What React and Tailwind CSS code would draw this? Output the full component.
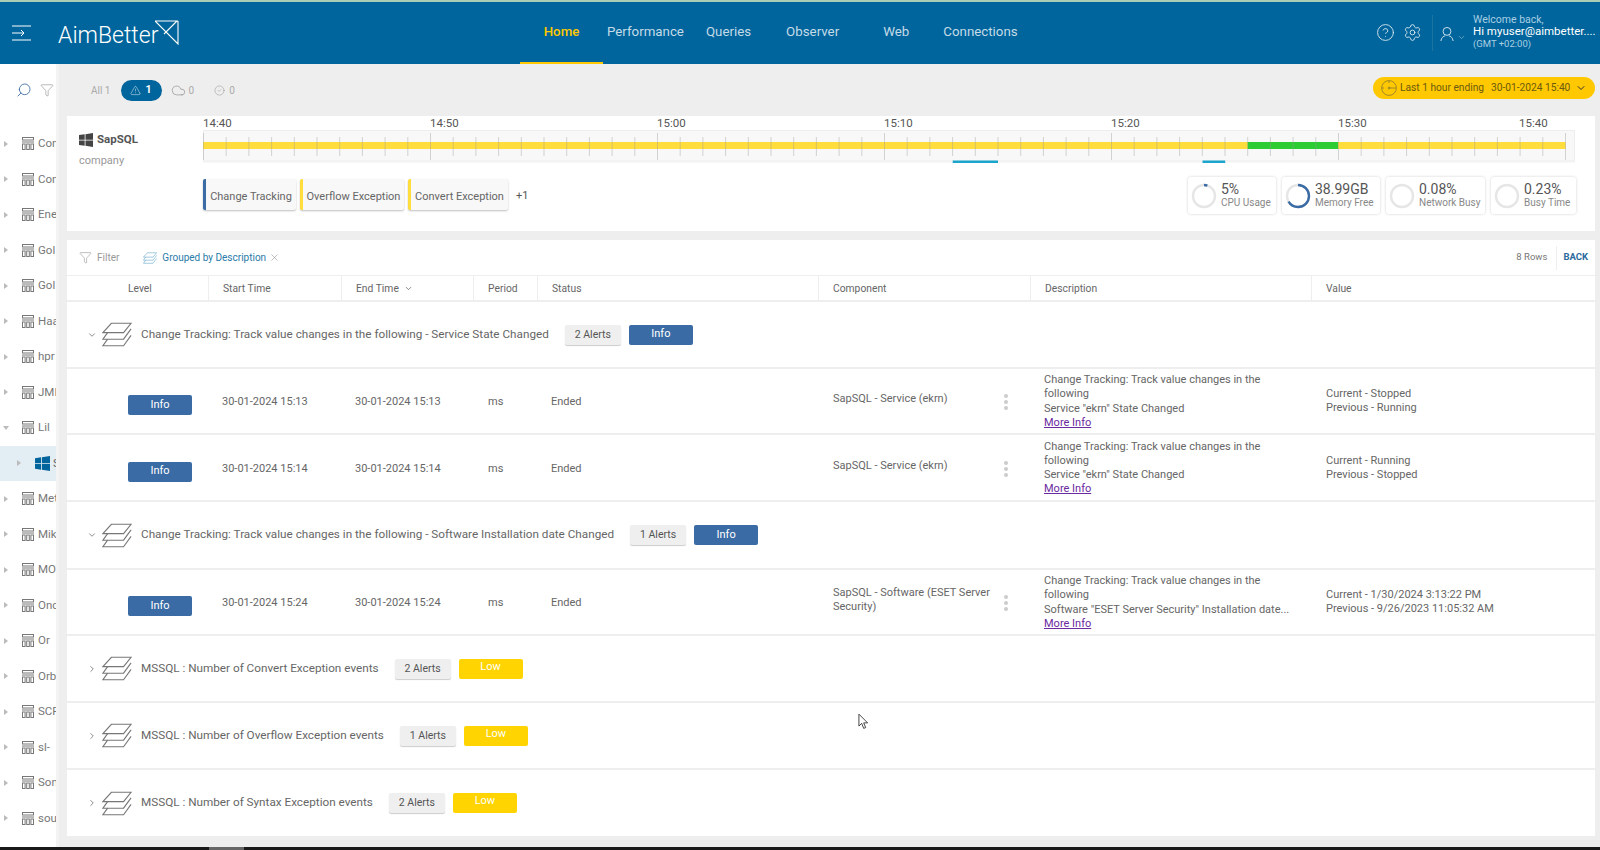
import React from 'react';
import { ChevronDown, ChevronRight, CircleHelp, Settings, Search, Funnel, X, TriangleAlert, Cloud, CircleCheck } from 'lucide-react';

const SERVERS = ['Con', 'Con', 'Ene', 'Gol', 'Gol', 'Haa', 'hpr', 'JMF', 'Lil', 'S', 'Met', 'Mik', 'MOT', 'Onc', 'Or', 'Orb', 'SCF', 'sl-', 'Son', 'sou'];
const COL = '141px 133px 132px 64px 281px 212px 281px 1fr';
const LABELS = [['14:40', 'w-[227px]'], ['14:50', 'w-[227px]'], ['15:00', 'w-[227px]'], ['15:10', 'w-[227px]'], ['15:20', 'w-[227px]'], ['15:30', 'w-[181px]'], ['15:40', 'w-[40px]']];

function Windows({ className, fill }) {
  return (
    <svg viewBox="0 0 16 16" className={className} fill={fill}>
      <path d="M0 2.4 6.5 1.4V7.6H0zM7.4 1.3 16 0V7.6H7.4zM0 8.5H6.5V14.6L0 13.6zM7.4 8.5H16V16L7.4 14.7z" />
    </svg>
  );
}

function DbIcon() {
  return (
    <svg viewBox="0 0 12 13" className="w-3 h-[13px] shrink-0" fill="none" stroke="#777" strokeWidth="1">
      <rect x="0.5" y="0.5" width="11" height="2.5" />
      <path d="M0 5H12" />
      <rect x="0.5" y="7" width="2.6" height="5.5" />
      <rect x="4.7" y="7" width="2.6" height="5.5" />
      <rect x="8.9" y="7" width="2.6" height="5.5" />
    </svg>
  );
}

function Layers({ className, stroke = '#777' }) {
  return (
    <svg viewBox="0 0 32 26" className={className} fill="none" stroke={stroke} strokeWidth="1.2">
      <path d="M10 1H31L23 11H1Z" />
      <path d="M6 11 1 18H23L31 7" />
      <path d="M6 18 1 25H23L31 14" />
    </svg>
  );
}

function Sidebar() {
  return (
    <div className="w-[59px] shrink-0 flex bg-white overflow-hidden">
      <div className="w-14 shrink-0 pt-4">
        <div className="h-5 flex items-center pl-4 gap-[8px]">
          <Search size={16} strokeWidth={1.3} className="text-[#3a6ba5] -scale-x-100" />
          <Funnel size={14} strokeWidth={1} className="text-[#888]" />
        </div>
        <div className="mt-[26px]">
          {SERVERS.map((name, i) => (
            i === 9 ? (
              <div key={i} className="h-[35.5px] flex items-center bg-[#e3edf4] overflow-hidden">
                <span className="ml-[17px] w-0 h-0 border-y-[3px] border-y-transparent border-l-[4px] border-l-[#bbb]" />
                <Windows className="w-[15px] h-[15px] ml-[14px] shrink-0" fill="#00659c" />
                <span className="ml-[3px] text-[11.5px] text-[#666]">{name}</span>
              </div>
            ) : (
              <div key={i} className="h-[35.5px] flex items-center overflow-hidden">
                {i === 8
                  ? <span className="ml-[3px] w-0 h-0 border-x-[3px] border-x-transparent border-t-[4px] border-t-[#bbb]" />
                  : <span className="ml-1 w-0 h-0 border-y-[3px] border-y-transparent border-l-[4px] border-l-[#bbb]" />}
                <span className={i === 8 ? 'ml-[13px]' : 'ml-[14px]'}><DbIcon /></span>
                <span className="ml-1 text-[11.5px] text-[#777] whitespace-nowrap">{name}</span>
              </div>
            )
          ))}
        </div>
      </div>
      <div className="w-[3px] bg-[#f3f3f3]" />
    </div>
  );
}

function Header() {
  return (
    <header className="h-[62px] shrink-0 bg-[#00659c] flex items-start text-white">
      <svg viewBox="0 0 19 16" className="w-[19px] h-4 mt-[23px] ml-3 shrink-0" fill="none" stroke="#fff" strokeWidth="1">
        <path d="M0 1H19M0 15H19M0 8H12M9 5l3 3-3 3" />
      </svg>
      <span className="ml-[27px] mt-[20px] text-[23px] leading-7 font-light w-[97px] whitespace-nowrap">AimBetter</span>
      <svg viewBox="0 0 24 25" className="w-6 h-[25px] mt-[18px] shrink-0" fill="none" stroke="#fff" strokeWidth="1.1">
        <path d="M0 1 22 1 9 14M0 1 23 24V1" />
      </svg>
      <nav className="flex ml-[341px] h-[62px] text-[13.3px]">
        <a className="w-[83px] h-[62px] flex items-center justify-center text-[#ffc800] font-medium border-b-[2px] border-[#ffc800]">Home</a>
        <a className="ml-1 h-[60px] flex items-center text-[#c5dbe8]">Performance</a>
        <a className="ml-[22px] h-[60px] flex items-center text-[#c5dbe8]">Queries</a>
        <a className="ml-[35px] h-[60px] flex items-center text-[#c5dbe8]">Observer</a>
        <a className="ml-[44px] h-[60px] flex items-center text-[#c5dbe8]">Web</a>
        <a className="ml-[34px] h-[60px] flex items-center text-[#c5dbe8]">Connections</a>
      </nav>
      <div className="flex-1" />
      <CircleHelp size={19} strokeWidth={1.1} className="mt-[21px] text-[#e2eef4]" />
      <Settings size={19} strokeWidth={1.1} className="ml-2 mt-[21px] text-[#e2eef4]" />
      <div className="ml-[10px] mt-[13px] w-px h-[36px] bg-[#1a759f]" />
      <svg viewBox="0 0 16 18" className="w-[14px] h-4 ml-[7px] mt-[24px] shrink-0" fill="none" stroke="#e2eef4" strokeWidth="1">
        <circle cx="8" cy="6" r="4.5" />
        <path d="M1 17c.5-4 3-5.5 5-6M15 17c-.5-4-3-5.5-5-6" />
      </svg>
      <ChevronDown size={9} className="ml-[3px] mt-[31px] text-[#7fb2cd]" />
      <div className="ml-[7px] w-[118px] mr-[9px] mt-[12px]">
        <div className="text-[10.5px] leading-[12px] text-[#a9cfe3]">Welcome back,</div>
        <div className="text-[11.5px] leading-[13px] mt-[-1px] whitespace-nowrap">Hi myuser@aimbetter....</div>
        <div className="text-[9.5px] leading-[12px] text-[#a9cfe3]">(GMT +02:00)</div>
      </div>
    </header>
  );
}

function Toolbar() {
  return (
    <div className="h-[52px] flex items-center text-[10px] text-[#aaa]">
      <span className="ml-[24px]">All 1</span>
      <span className="ml-[10px] w-[41px] h-[21px] rounded-full bg-[#00659c] text-white text-[10.5px] flex items-center justify-center gap-[4px] font-bold">
        <TriangleAlert size={11} strokeWidth={1} />1
      </span>
      <Cloud size={15} strokeWidth={1} className="ml-[9px] text-[#888]" />
      <span className="ml-[3px]">0</span>
      <CircleCheck size={11} strokeWidth={1} className="ml-[20px] text-[#888]" />
      <span className="ml-[4px]">0</span>
      <div className="flex-1" />
      <div className="w-[222px] h-[22px] rounded-full bg-[#ffc800] flex items-center text-[10.2px] text-[#6b5a10] mt-[-4px]">
        <svg viewBox="0 0 16 16" className="w-4 h-4 ml-2 shrink-0" fill="none" stroke="#8a7a30" strokeWidth="0.8">
          <circle cx="8" cy="8" r="7.4" />
          <circle cx="8" cy="8" r="1" />
          <path d="M8 8H13M8 1v2M1 8h2M13 8h2" />
        </svg>
        <span className="ml-[3px] whitespace-nowrap">Last 1 hour ending</span>
        <span className="ml-[7px] whitespace-nowrap">30-01-2024 15:40</span>
        <ChevronDown size={12} className="ml-[5px] text-[#333]" />
      </div>
    </div>
  );
}

function Timeline() {
  const ticks = Array.from({ length: 61 }, (_, i) => i);
  return (
    <svg width="1372" height="33" className="block bg-[#f8f8f8]">
      <rect x="0.5" y="0.5" width="1371" height="30.5" fill="none" stroke="#eee" />
      <rect x="0" y="12" width="1362.7" height="7" fill="#ffdd3c" />
      <rect x="1044.7" y="12" width="90.3" height="7" fill="#2ecc33" />
      {ticks.map(i => (
        <line key={i} x1={i * 22.7 + 0.5} x2={i * 22.7 + 0.5}
          y1={i % 10 === 0 ? 3 : 7} y2={i % 10 === 0 ? 30 : 26} stroke="#999" strokeOpacity="0.4" />
      ))}
      <rect x="749.7" y="30.5" width="45.3" height="2.5" fill="#1ba5cc" />
      <rect x="999.5" y="30.5" width="22.7" height="2.5" fill="#1ba5cc" />
    </svg>
  );
}

function Chip({ color, label, width }) {
  return (
    <div className={`h-[31px] pt-[5px] flex items-center justify-center bg-[#f8f8f8] border-l-[3px] rounded-[2px] shadow-[0_1px_2px_rgba(0,0,0,0.25)] text-[11px] text-[#666] whitespace-nowrap ${color} ${width}`}>
      {label}
    </div>
  );
}

function Stat({ value, label, pct, width }) {
  const len = 2 * Math.PI * 11;
  return (
    <div className={`h-[37px] flex items-center bg-white rounded-[3px] shadow-[0_0_3px_rgba(0,0,0,0.18)] ${width}`}>
      <svg viewBox="0 0 26 26" className="w-[26px] h-[26px] ml-[3px] shrink-0 -rotate-90" fill="none" strokeWidth="2.4">
        <circle cx="13" cy="13" r="11" stroke="#e6e6e6" />
        <circle cx="13" cy="13" r="11" stroke="#3a6ba5" strokeDasharray={`${len * pct} ${len}`} />
      </svg>
      <div className="ml-1">
        <div className="text-[14px] leading-[13px] text-[#555]">{value}</div>
        <div className="text-[10px] leading-[13px] text-[#888] whitespace-nowrap">{label}</div>
      </div>
    </div>
  );
}

function SummaryPanel() {
  return (
    <section className="h-[115px] bg-white flex">
      <div className="w-[136px] shrink-0 pl-3 pt-[15px]">
        <div className="flex items-center">
          <Windows className="w-[14px] h-[14px]" fill="#444" />
          <span className="ml-1 text-[11.5px] font-bold text-[#555]">SapSQL</span>
        </div>
        <div className="mt-[5px] text-[11px] text-[#999]">company</div>
      </div>
      <div className="w-[1372px]">
        <div className="h-[14px] flex text-[11.5px] leading-[14px] text-[#555]">
          {LABELS.map(([t, w]) => <span key={t} className={w}>{t}</span>)}
        </div>
        <Timeline />
        <div className="mt-[14px] flex items-start">
          <div className="mt-[2px] flex items-center">
            <Chip color="border-[#3a6ba5]" label="Change Tracking" width="w-[93px]" />
            <Chip color="border-[#ffdd3c] ml-[4px]" label="Overflow Exception" width="w-[104px]" />
            <Chip color="border-[#ffdd3c] ml-[4px]" label="Convert Exception" width="w-[100px]" />
            <span className="ml-2 pt-[3px] text-[11px] text-[#555]">+1</span>
          </div>
          <div className="flex-1" />
          <div className="flex gap-[6px] mr-[-1px]">
            <Stat value="5%" label="CPU Usage" pct={0.05} width="w-[88px]" />
            <Stat value="38.99GB" label="Memory Free" pct={0.66} width="w-[98px]" />
            <Stat value="0.08%" label="Network Busy" pct={0} width="w-[99px]" />
            <Stat value="0.23%" label="Busy Time" pct={0} width="w-[85px]" />
          </div>
        </div>
      </div>
    </section>
  );
}

function Button({ color, label, className = '' }) {
  return (
    <span className={`w-16 h-5 rounded-[2px] text-white text-[11px] flex items-center justify-center ${color} ${className}`}>{label}</span>
  );
}

function Group({ title, alerts, level, open, height }) {
  const Chevron = open ? ChevronDown : ChevronRight;
  return (
    <div className={`flex items-center border-b-2 border-[#eee] ${height}`}>
      <Chevron size={10} className="ml-5 text-[#777]" />
      <Layers className="w-[30px] h-[25px] ml-[5px]" />
      <span className="ml-[9px] text-[11.73px] text-[#666] whitespace-nowrap">{title}</span>
      <span className="ml-4 w-14 h-5 rounded-[2px] bg-[#efefef] shadow-[0_1px_1px_rgba(0,0,0,0.2)] text-[10.5px] text-[#555] flex items-center justify-center">{alerts} Alerts</span>
      {level === 'Info'
        ? <Button color="bg-[#3a6ba5]" label="Info" className="ml-2" />
        : <Button color="bg-[#ffd400]" label="Low" className="ml-2 pb-[3px]" />}
    </div>
  );
}

function Row({ time, component, lines, value, prev, height }) {
  return (
    <div className={`grid items-center border-b-2 border-[#eee] text-[11px] text-[#666] ${height}`} style={{ gridTemplateColumns: COL }}>
      <div className="pl-[61px] pt-2"><Button color="bg-[#3a6ba5]" label="Info" /></div>
      <span className="pl-[14px] pt-[3px]">{time}</span>
      <span className="pl-[14px] pt-[3px]">{time}</span>
      <span className="pl-[15px] pt-[3px]">ms</span>
      <span className="pl-[14px] pt-[3px]">Ended</span>
      <div className="pl-[15px] flex items-center">
        <span className="w-[162px] leading-[14px] mb-1">{component}</span>
        <span className="ml-[9px] flex flex-col gap-[2px] mt-[2px]">
          <i className="w-[4px] h-[4px] rounded-full bg-[#ccc]" />
          <i className="w-[4px] h-[4px] rounded-full bg-[#ccc]" />
          <i className="w-[4px] h-[4px] rounded-full bg-[#ccc]" />
        </span>
      </div>
      <div className="pl-[14px] pr-[24px] pt-[1px] leading-[14.2px]">
        <div>{lines[0]}</div>
        <div className="whitespace-nowrap">{lines[1]}</div>
        <a className="text-[#6a2aa0] underline">More Info</a>
      </div>
      <div className="pl-[15px] leading-[14px]">
        <div>Current - {value}</div>
        <div>Previous - {prev}</div>
      </div>
    </div>
  );
}

function AlertsPanel() {
  const head = ['Level', 'Start Time', 'End Time', 'Period', 'Status', 'Component', 'Description', 'Value'];
  return (
    <section className="mt-[9px] bg-white">
      <div className="h-[36px] flex items-center border-b border-[#eee] text-[10px]">
        <Funnel size={13} strokeWidth={1} className="ml-[12px] text-[#888]" />
        <span className="ml-[5px] text-[#999]">Filter</span>
        <Layers className="w-[14px] h-[12px] ml-[24px]" stroke="#4f9cc4" />
        <span className="ml-[5px] text-[#2a7ba8]">Grouped by Description</span>
        <X size={11} strokeWidth={1} className="ml-[3px] text-[#777]" />
        <div className="flex-1" />
        <span className="text-[9.5px] text-[#777]">8 Rows</span>
        <span className="ml-[9px] h-[24px] pl-[6px] pr-[7px] border-l border-[#eee] flex items-center text-[9.5px] font-bold text-[#2a6a9c]">BACK</span>
      </div>
      <div className="h-[26px] grid items-center border-b-2 border-[#eee] text-[10.3px] text-[#666]" style={{ gridTemplateColumns: COL }}>
        {head.map((h, i) => (
          <div key={h} className={`h-full flex items-center pt-[1px] ${i === 0 ? 'pl-[61px]' : 'pl-[14px] border-l border-[#eee]'}`}>
            {h}
            {h === 'End Time' && <ChevronDown size={9} className="ml-[5px]" />}
          </div>
        ))}
      </div>
      <Group open height="h-[67px]" title="Change Tracking: Track value changes in the following - Service State Changed" alerts={2} level="Info" />
      <Row height="h-[66px]" time="30-01-2024 15:13" component="SapSQL - Service (ekrn)"
        lines={['Change Tracking: Track value changes in the following', 'Service "ekrn" State Changed']} value="Stopped" prev="Running" />
      <Row height="h-[67px]" time="30-01-2024 15:14" component="SapSQL - Service (ekrn)"
        lines={['Change Tracking: Track value changes in the following', 'Service "ekrn" State Changed']} value="Running" prev="Stopped" />
      <Group open height="h-[68px]" title="Change Tracking: Track value changes in the following - Software Installation date Changed" alerts={1} level="Info" />
      <Row height="h-[66px]" time="30-01-2024 15:24" component="SapSQL - Software (ESET Server Security)"
        lines={['Change Tracking: Track value changes in the following', 'Software "ESET Server Security" Installation date...']} value="1/30/2024 3:13:22 PM" prev="9/26/2023 11:05:32 AM" />
      <Group height="h-[67px]" title="MSSQL : Number of Convert Exception events" alerts={2} level="Low" />
      <Group height="h-[67px]" title="MSSQL : Number of Overflow Exception events" alerts={1} level="Low" />
      <Group height="h-[68px]" title="MSSQL : Number of Syntax Exception events" alerts={2} level="Low" />
    </section>
  );
}

export default function App() {
  return (
    <div className="relative h-[850px] w-[1600px] overflow-hidden flex flex-col bg-[#eee] font-['Roboto',sans-serif]">
      <div className="h-[2px] shrink-0 bg-[#a9cdb5]" />
      <Header />
      <div className="flex-1 min-h-0 flex">
        <Sidebar />
        <main className="flex-1 min-w-0 pl-2 pr-[5px]">
          <Toolbar />
          <SummaryPanel />
          <AlertsPanel />
        </main>
      </div>
      <div className="h-[3px] shrink-0 bg-[#1a1a1a] flex">
        <div className="ml-[209px] w-[35px] bg-[#666]" />
      </div>
      <svg viewBox="0 0 12 18" className="absolute left-[858px] top-[713px] w-[11px] h-[17px]" fill="#fff" stroke="#222" strokeWidth="0.9">
        <path d="M1 1V14L4 11 6.2 16.5 8.4 15.6 6.2 10.5H10.5Z" />
      </svg>
    </div>
  );
}
